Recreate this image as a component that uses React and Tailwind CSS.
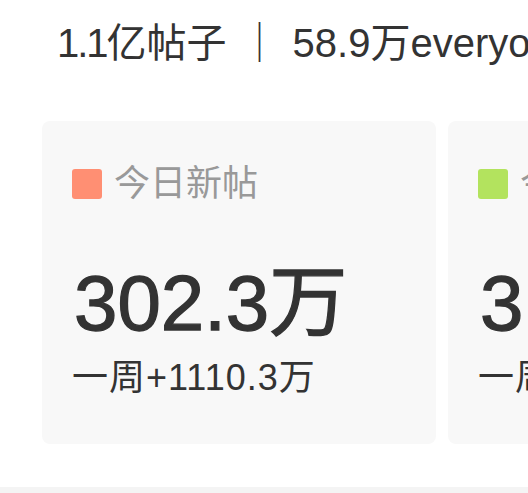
const font = "font-['Liberation_Sans','Noto_Sans_CJK_SC',sans-serif]";

const cards = [
  { color: 'bg-[#ff8f73]', label: '今日新帖', value: '302.3万', week: '一周+1110.3万' },
  { color: 'bg-[#b3e35e]', label: '今日回帖', value: '31.6万', week: '一周+221.4万' },
];

function StatCard({ color, label, value, week }) {
  return (
    <div className="w-[394px] h-[323px] shrink-0 rounded-[8px] bg-[#f8f8f8] pl-[30px] pt-[45px]">
      <div className="flex items-center h-[36px] gap-[12px]">
        <span className={`w-[30px] h-[30px] rounded-[3px] ${color}`} />
        <span className="text-[36px] leading-[36px] text-[#999999]">{label}</span>
      </div>
      <div className="mt-[63px] pl-[2px] text-[78px] leading-[76px] text-[#333333] [-webkit-text-stroke:1.3px_#333333]">
        {value}
      </div>
      <div className="mt-[19px] text-[36px] leading-[36px] tracking-[1px] text-[#333333]">{week}</div>
    </div>
  );
}

export default function App() {
  return (
    <div className={`w-[528px] h-[493px] overflow-hidden bg-white ${font}`}>
      <div className="h-[86px] flex items-center pl-[57px] text-[40px] text-[#333333] whitespace-nowrap">
        <span className="tracking-[-2px]">1.1</span>
        <span>亿帖子</span>
        <span className="mx-[13px]">｜</span>
        <span>58.9万everyone</span>
      </div>
      <div className="mt-[35px] flex gap-[12px] pl-[42px]">
        {cards.map((c) => (
          <StatCard key={c.label} {...c} />
        ))}
      </div>
      <div className="mt-[43px] h-[6px] bg-[#f4f4f4]" />
    </div>
  );
}
